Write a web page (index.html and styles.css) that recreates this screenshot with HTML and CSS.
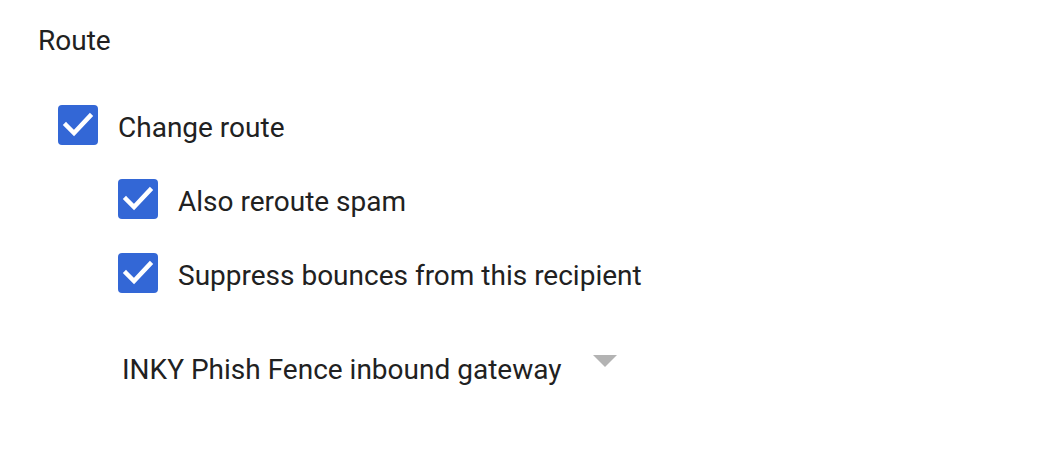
FILE: index.html
```html
<!DOCTYPE html>
<html lang="en">
<head>
    <meta charset="UTF-8">
    <title>Route</title>
    <link rel="stylesheet" href="styles.css">
</head>
<body>
    <div class="section">
        <h2 class="title">Route</h2>

        <label class="option">
            <span class="box">
                <svg width="40" height="40" viewBox="0 0 40 40"><polyline points="8,20 16,28 32,11" fill="none" stroke="#fff" stroke-width="4.5" stroke-linecap="square"/></svg>
            </span>
            <span class="label">Change route</span>
        </label>

        <div class="sub">
            <label class="option">
                <span class="box">
                    <svg width="40" height="40" viewBox="0 0 40 40"><polyline points="8,20 16,28 32,11" fill="none" stroke="#fff" stroke-width="4.5" stroke-linecap="square"/></svg>
                </span>
                <span class="label">Also reroute spam</span>
            </label>
            <label class="option">
                <span class="box">
                    <svg width="40" height="40" viewBox="0 0 40 40"><polyline points="8,20 16,28 32,11" fill="none" stroke="#fff" stroke-width="4.5" stroke-linecap="square"/></svg>
                </span>
                <span class="label">Suppress bounces from this recipient</span>
            </label>

            <div class="select">
                <span class="value">INKY Phish Fence inbound gateway</span>
                <span class="arrow"></span>
            </div>
        </div>
    </div>
</body>
</html>
```

FILE: styles.css
```css
* {
    margin: 0;
    padding: 0;
    box-sizing: border-box;
}

body {
    background-color: #fff;
    color: #212121;
    font-family: Roboto, "Liberation Sans", sans-serif;
    font-size: 28px;
}

.section {
    padding: 24px 38px;
}

.title {
    font-size: 28px;
    font-weight: 400;
    line-height: 34px;
}

.option {
    display: flex;
    align-items: center;
    gap: 20px;
    height: 40px;
    margin-top: 47px;
    margin-left: 20px;
}

.sub .option {
    margin-top: 34px;
    margin-left: 80px;
}

.box {
    width: 40px;
    height: 40px;
    background-color: #3367d6;
    border-radius: 4px;
    display: flex;
}

.label {
    line-height: 34px;
    margin-top: 6px;
}

.select {
    display: flex;
    align-items: center;
    gap: 32px;
    margin-top: 60px;
    margin-left: 84px;
    line-height: 34px;
}

.arrow {
    width: 0;
    height: 0;
    border-left: 12px solid transparent;
    border-right: 12px solid transparent;
    border-top: 12px solid #b3b3b3;
    margin-top: -18px;
}
```
